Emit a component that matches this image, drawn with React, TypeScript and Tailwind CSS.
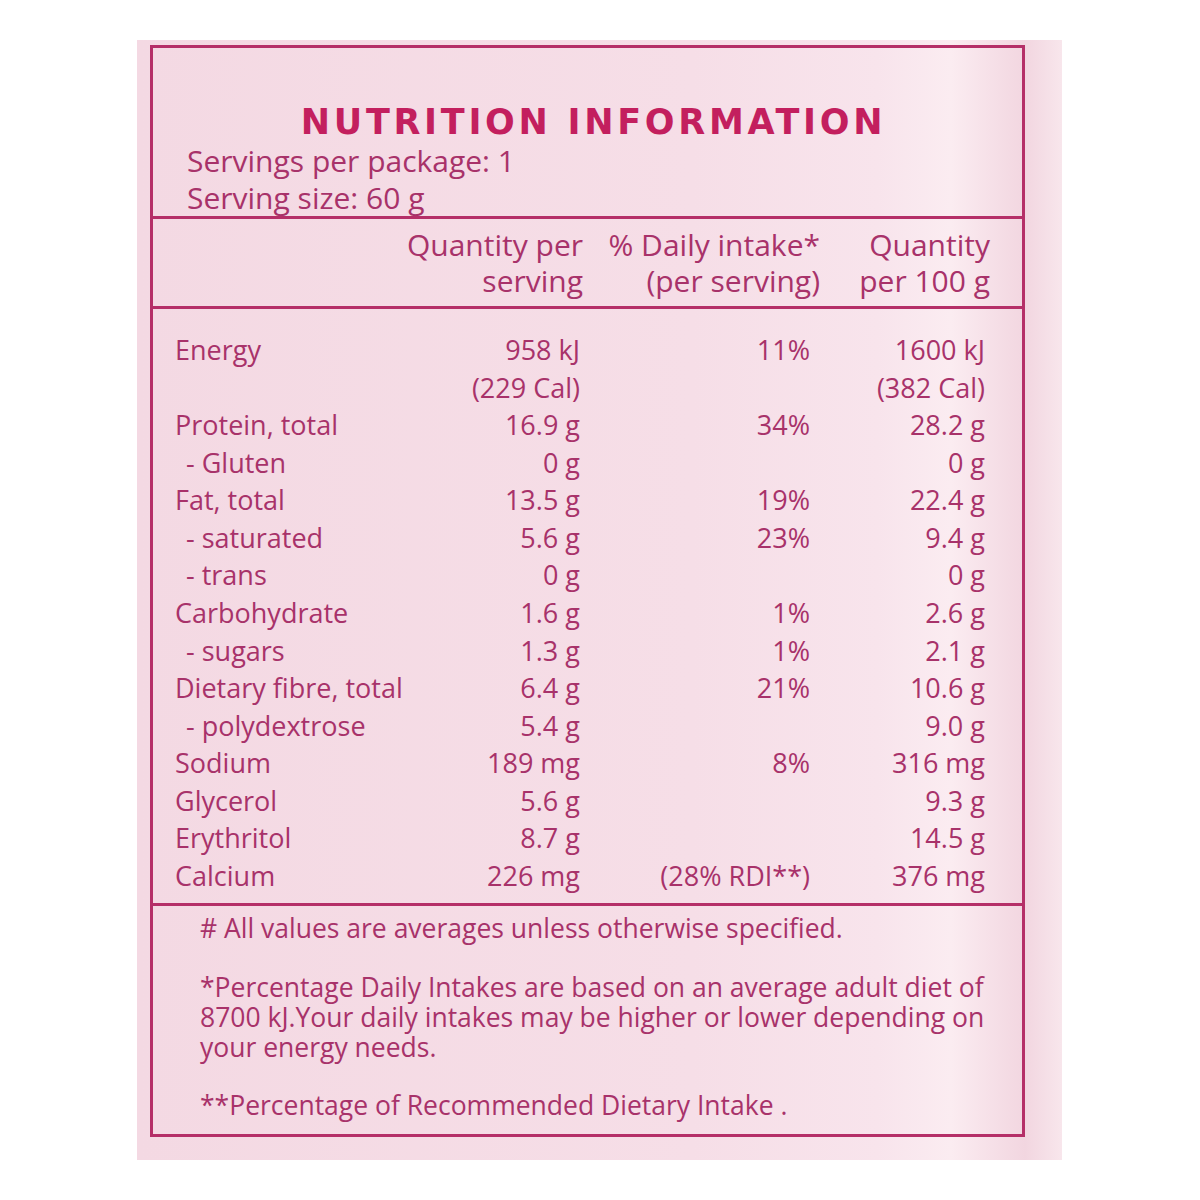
import React from "react";

type Row = { label: string; sub?: boolean; q: string; di: string; p: string };

const rows: Row[] = [
  { label: "Energy", q: "958 kJ", di: "11%", p: "1600 kJ" },
  { label: "", q: "(229 Cal)", di: "", p: "(382 Cal)" },
  { label: "Protein, total", q: "16.9 g", di: "34%", p: "28.2 g" },
  { label: "- Gluten", sub: true, q: "0 g", di: "", p: "0 g" },
  { label: "Fat, total", q: "13.5 g", di: "19%", p: "22.4 g" },
  { label: "- saturated", sub: true, q: "5.6 g", di: "23%", p: "9.4 g" },
  { label: "- trans", sub: true, q: "0 g", di: "", p: "0 g" },
  { label: "Carbohydrate", q: "1.6 g", di: "1%", p: "2.6 g" },
  { label: "- sugars", sub: true, q: "1.3 g", di: "1%", p: "2.1 g" },
  { label: "Dietary fibre, total", q: "6.4 g", di: "21%", p: "10.6 g" },
  { label: "- polydextrose", sub: true, q: "5.4 g", di: "", p: "9.0 g" },
  { label: "Sodium", q: "189 mg", di: "8%", p: "316 mg" },
  { label: "Glycerol", q: "5.6 g", di: "", p: "9.3 g" },
  { label: "Erythritol", q: "8.7 g", di: "", p: "14.5 g" },
  { label: "Calcium", q: "226 mg", di: "(28% RDI**)", p: "376 mg" },
];

export default function App() {
  return (
    <div className="w-[1200px] h-[1200px] bg-white pt-[40px] pl-[137px]" style={{ fontFamily: "'Open Sans', Lato, sans-serif" }}>
      <div className="w-[925px] h-[1120px] pl-[13px] pt-[5px] bg-[linear-gradient(90deg,#f4d9e3_0%,#f6dee7_60%,#f8e4ec_80%,#fbecf1_88%,#f2d6e0_96%,#f8e6ec_100%)]">
        <div className="w-[875px] h-[1092px] border-[3px] border-[#b52f68] flex flex-col text-[#a8326a]">
          {/* Title section */}
          <div className="h-[171px] pt-[54px] border-b-[3px] border-[#b52f68]">
            <div
              className="text-center pl-[12px] leading-[40px] text-[35px] font-bold text-[#c31f5e] tracking-[3.7px]"
              style={{ fontFamily: "'DejaVu Sans', sans-serif" }}
            >
              NUTRITION INFORMATION
            </div>
            <div className="pl-[34px] text-[30px] leading-[37px]">
              <div>Servings per package: 1</div>
              <div>Serving size: 60 g</div>
            </div>
          </div>
          {/* Header */}
          <div className="h-[90px] pt-[8px] border-b-[3px] border-[#b52f68] grid grid-cols-[430px_237px_170px] text-[30px] leading-[36px] text-right">
            <div>
              <div>Quantity per</div>
              <div>serving</div>
            </div>
            <div>
              <div>% Daily intake*</div>
              <div>(per serving)</div>
            </div>
            <div>
              <div>Quantity</div>
              <div>per 100 g</div>
            </div>
          </div>
          {/* Body */}
          <div className="h-[597px] pt-[22px] border-b-[3px] border-[#b52f68] pl-[22px]">
            {rows.map((r, i) => (
              <div key={i} className="grid grid-cols-[265px_140px_230px_175px] text-[27px] leading-[37.57px] h-[37.57px]">
                <div className={r.sub ? "pl-[11px]" : ""}>{r.label}</div>
                <div className="text-right">{r.q}</div>
                <div className="text-right">{r.di}</div>
                <div className="text-right">{r.p}</div>
              </div>
            ))}
          </div>
          {/* Footer */}
          <div className="flex-1 pt-[7px] pl-[47px] text-[26.5px] leading-[30px]">
            <div># All values are averages unless otherwise specified.</div>
            <div className="mt-[29px]">
              <div>*Percentage Daily Intakes are based on an average adult diet of</div>
              <div>8700 kJ.Your daily intakes may be higher or lower depending on</div>
              <div>your energy needs.</div>
            </div>
            <div className="mt-[28px]">**Percentage of Recommended Dietary Intake .</div>
          </div>
        </div>
      </div>
    </div>
  );
}
